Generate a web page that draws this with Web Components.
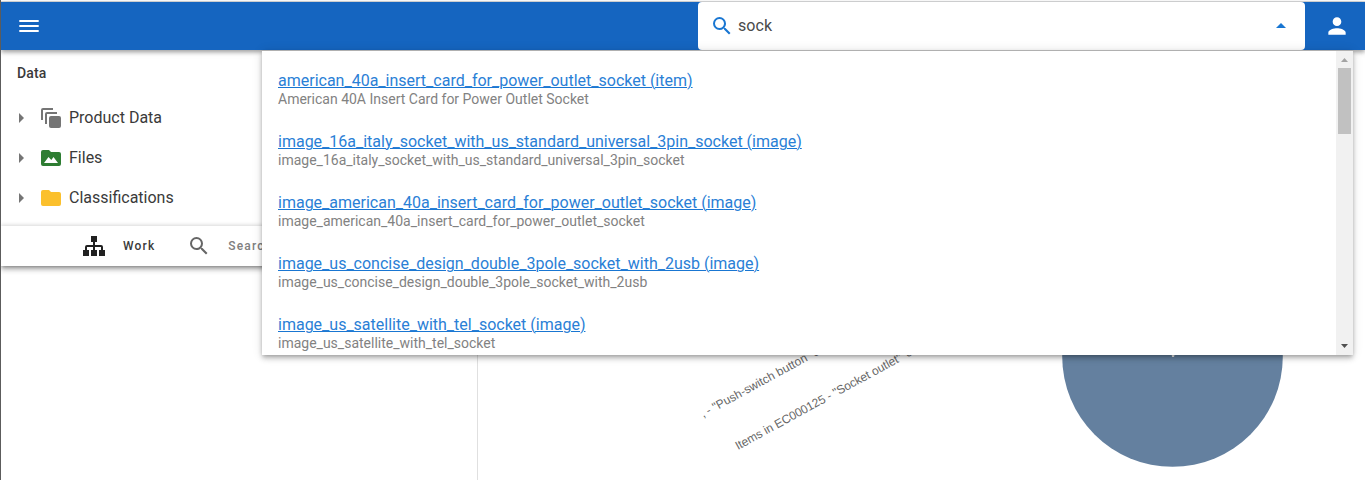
<!DOCTYPE html>
<html lang="en">
<head>
<meta charset="utf-8">
<title>Product Data</title>
<style>
html,body{margin:0;height:100%;overflow:hidden;background:#fff}
body{font-family:Roboto,"Liberation Sans",sans-serif;color:#3a3a3a}
</style>
</head>
<body>
<pim-app></pim-app>
<script>
const define = (name, html) => customElements.define(name, class extends HTMLElement {
  constructor() {
    super();
    this.attachShadow({mode: 'open'}).innerHTML = html;
  }
});

define('app-bar', `<style>
:host{display:flex;height:48px;background:#1565c0;box-shadow:0 2px 4px -1px rgba(0,0,0,.2),0 3px 4px rgba(0,0,0,.16),0 1px 8px rgba(0,0,0,.12);align-items:stretch;position:relative;z-index:1}
.menu{width:697px;display:flex;align-items:center;padding-left:16px;box-sizing:border-box}
.user{flex:1;display:flex;align-items:center;justify-content:center;padding-left:4px}
svg{display:block;fill:#fff}
</style>
<div class="menu"><svg width="24" height="24" viewBox="0 0 24 24"><path d="M2.300 6h19.400v2H2.300zm0 5h19.400v2H2.300zm0 5h19.400v2H2.300z"/></svg></div>
<slot></slot>
<div class="user"><svg width="26" height="26" viewBox="0 0 24 24"><path d="M12 12c2.210 0 4-1.790 4-4s-1.790-4-4-4-4 1.790-4 4 1.790 4 4 4zm0 2c-2.670 0-8 1.340-8 4v2h16v-2c0-2.660-5.330-4-8-4z"/></svg></div>`);

define('search-field', `<style>
:host{display:flex;width:607px;box-sizing:border-box;background:#fff;border-radius:4px;align-items:center;padding:0 12px 0 12px;font-size:16px;letter-spacing:.1px;color:#4a4a4a}
span{flex:1;padding-left:4px;line-height:24px}
svg{display:block;fill:#1976d2}
</style>
<svg width="24" height="24" viewBox="0 0 24 24"><path d="M9.500 3A6.500 6.500 0 0 1 16 9.500c0 1.610-.59 3.090-1.560 4.230l.27.27h.79l5 5-1.500 1.500-5-5v-.79l-.27-.27A6.516 6.516 0 0 1 9.500 16 6.500 6.500 0 0 1 3 9.500 6.500 6.500 0 0 1 9.500 3m0 2C7 5 5 7 5 9.500S7 14 9.500 14 14 12 14 9.500 12 5 9.500 5z"/></svg>
<span><slot></slot></span>
<svg width="24" height="24" viewBox="0 0 24 24"><path d="M7 14l5-5 5 5z"/></svg>`);

define('tree-row', `<style>
:host{display:flex;height:40px;align-items:center;font-size:16px;padding-left:8px}
.a{width:24px;height:24px;fill:#757575;margin:2px 6px 0 0}
::slotted(svg){display:block;width:24px;height:24px;margin:2px 6px 0 0}
</style>
<svg class="a" viewBox="0 0 24 24"><path d="M10 17l5-5-5-5z"/></svg><slot name="icon"></slot><slot></slot>`);

define('tab-item', `<style>
:host{display:flex;align-items:center;font-size:12px;font-weight:500;letter-spacing:1.150px;color:#808080}
:host([active]){color:#3a3a3a}
::slotted(svg){display:block;margin-right:17px}
</style><slot name="icon"></slot><slot></slot>`);

define('nav-panel', `<style>
:host{display:block;height:216px;width:476px;background:#fff;box-shadow:0 2px 4px -1px rgba(0,0,0,.3),0 4px 5px rgba(0,0,0,.18),0 1px 8px rgba(0,0,0,.12)}
h2{margin:0;padding:0 16px;height:47px;line-height:46px;font-size:14px;font-weight:500;letter-spacing:.1px}
.tree{height:129px}
.tabs{height:40px;display:flex;align-items:center;padding-left:81px;gap:32px;box-shadow:0 -1px 4px rgba(0,0,0,.16)}
</style>
<h2>Data</h2>
<div class="tree">
<tree-row><svg slot="icon" viewBox="0 0 24 24" fill="#757575"><rect x="10" y="10" width="12" height="12" rx="2"/><path d="M2 14V4a2 2 0 0 1 2-2h10v2H4v10zM6 18V8a2 2 0 0 1 2-2h10v2H8v10z"/></svg>Product Data</tree-row>
<tree-row><svg slot="icon" viewBox="0 0 24 24" fill="#2e7d32"><path d="M4 4h6l2 2h8a2 2 0 0 1 2 2v10a2 2 0 0 1-2 2H4a2 2 0 0 1-2-2V6a2 2 0 0 1 2-2z"/><path fill="#fff" d="M5 17l4.500-6 2.800 3 2.200-3L19 17z"/></svg>Files</tree-row>
<tree-row><svg slot="icon" viewBox="0 0 24 24" fill="#fbc02d"><path d="M10 4H4a2 2 0 0 0-2 2v12a2 2 0 0 0 2 2h16a2 2 0 0 0 2-2V8a2 2 0 0 0-2-2h-8z"/></svg>Classifications</tree-row>
</div>
<div class="tabs">
<tab-item active><svg slot="icon" width="24" height="24" viewBox="0 0 24 24" fill="#212121"><path d="M9 2h6v6h-2v3h6a2 2 0 0 1 2 2v3h2v6h-6v-6h2v-3h-6v3h2v6H9v-6h2v-3H5v3h2v6H1v-6h2v-3a2 2 0 0 1 2-2h6V8H9z"/></svg>Work</tab-item>
<tab-item><svg slot="icon" width="24" height="24" viewBox="0 0 24 24" fill="#666"><path d="M15.500 14h-.79l-.28-.27A6.471 6.471 0 0 0 16 9.500 6.500 6.500 0 1 0 9.500 16c1.610 0 3.090-.59 4.230-1.570l.27.28v.79l5 4.990L20.490 19l-4.990-5zm-6 0C7.010 14 5 11.990 5 9.500S7.010 5 9.500 5 14 7.010 14 9.500 11.990 14 9.500 14z"/></svg>Search</tab-item>
</div>`);

define('result-item', `<style>
:host{display:block;height:61px;box-sizing:border-box;padding:20px 16px 0}
a{display:block;width:max-content;font-size:16px;line-height:20px;color:#2a80d6;text-decoration:underline #1976d2;text-decoration-thickness:1px}
small{display:block;width:max-content;font-size:14px;line-height:16px;color:#828282}
</style><a><slot></slot></a><small><slot name="sub"></slot></small>`);

define('result-menu', `<style>
:host{display:flex;width:1091px;height:305px;box-sizing:border-box;background:#fff;border-top:1px solid #b0b0b0;overflow:hidden;box-shadow:0 2px 4px -1px rgba(0,0,0,.25),0 4px 5px rgba(0,0,0,.14),0 1px 10px rgba(0,0,0,.12)}
.list{flex:1;overflow:hidden;min-width:0}
.bar{width:17px;background:#f1f1f1;display:flex;flex-direction:column;align-items:center}
.thumb{width:13px;height:66px;background:#c1c1c1}
.fill{flex:1}
svg{display:block}
</style>
<div class="list"><slot></slot></div>
<div class="bar"><svg width="17" height="17"><path d="M5 11l3.500-4 3.500 4z" fill="#a3a3a3"/></svg><div class="thumb"></div><div class="fill"></div><svg width="17" height="17"><path d="M5 6h7l-3.500 4z" fill="#505050"/></svg></div>`);

define('data-chart', `<style>:host{display:block}svg{display:block}</style>
<svg width="886" height="430" viewBox="478 50 886 430">
<circle cx="1172.500" cy="356.500" r="110.300" fill="#64809f"/>
<path d="M1171.500 353h3.500l-1 4h-2z" fill="#eee"/>
<g font-family="Liberation Sans,Arial,sans-serif" font-size="12" fill="#666">
<g transform="translate(738 450) rotate(-28.600)"><text textLength="188">Items in EC000125 - "Socket outlet"</text><text x="193">c</text></g>
<g transform="translate(708.500 414.800) rotate(-28.600)"><text textLength="118">- "Push-switch button"</text><text x="121">c</text><text x="-6">,</text></g>
</g></svg>`);

define('pim-app', `<style>
:host{display:flex;flex-direction:column;height:480px;box-sizing:border-box;border-left:1px solid #5c5c5c;position:relative;overflow:hidden}
.edge{height:1px;margin-top:1px;background:#d9dadb;flex:none}
app-bar{flex:none}
.body{display:flex;flex:1}
aside{width:476px;border-right:1px solid #e0e0e0}
result-menu{position:absolute;left:261px;top:50px;z-index:3}
</style>
<div class="edge"></div>
<app-bar><search-field>sock</search-field></app-bar>
<div class="body"><aside><nav-panel></nav-panel></aside><data-chart></data-chart></div>
<result-menu>
<result-item>american_40a_insert_card_for_power_outlet_socket (item)<span slot="sub">American 40A Insert Card for Power Outlet Socket</span></result-item>
<result-item>image_16a_italy_socket_with_us_standard_universal_3pin_socket (image)<span slot="sub">image_16a_italy_socket_with_us_standard_universal_3pin_socket</span></result-item>
<result-item>image_american_40a_insert_card_for_power_outlet_socket (image)<span slot="sub">image_american_40a_insert_card_for_power_outlet_socket</span></result-item>
<result-item>image_us_concise_design_double_3pole_socket_with_2usb (image)<span slot="sub">image_us_concise_design_double_3pole_socket_with_2usb</span></result-item>
<result-item>image_us_satellite_with_tel_socket (image)<span slot="sub">image_us_satellite_with_tel_socket</span></result-item>
</result-menu>`);
</script>
</body>
</html>
